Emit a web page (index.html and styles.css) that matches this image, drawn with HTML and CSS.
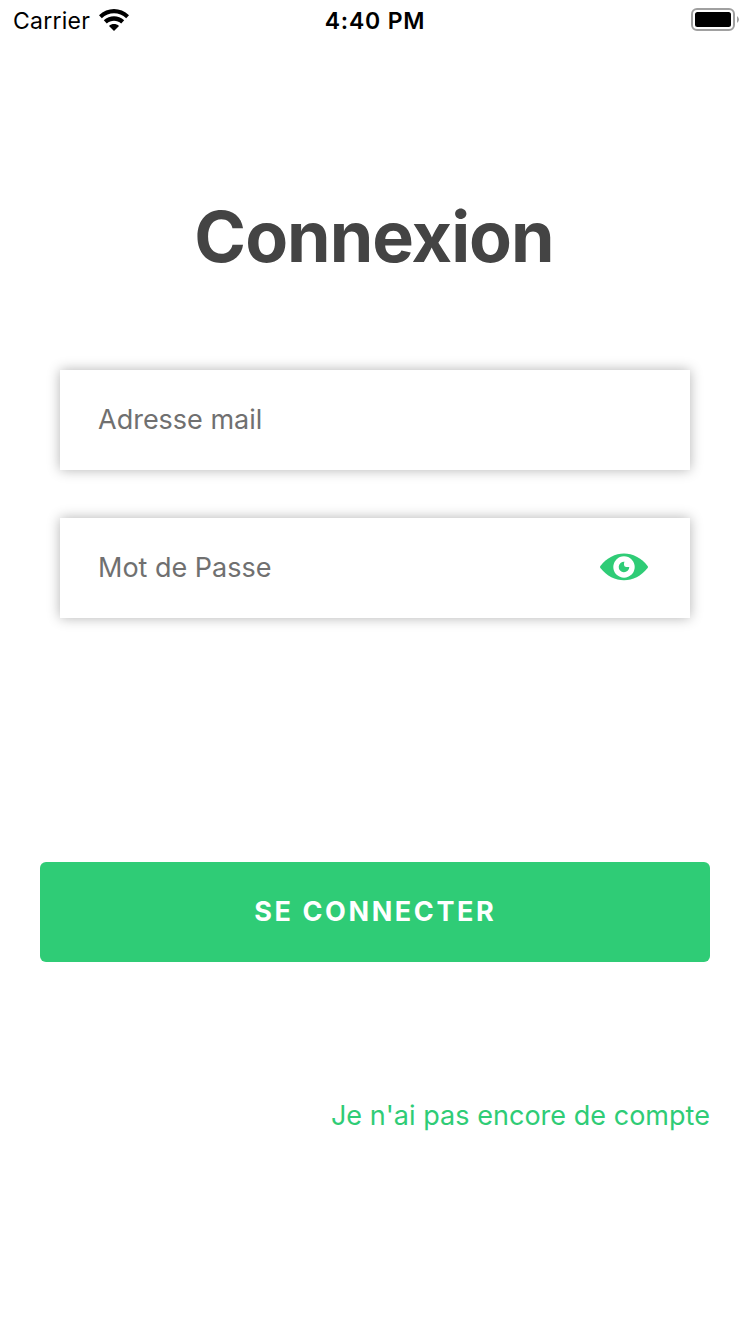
FILE: index.html
```html
<!DOCTYPE html>
<html lang="fr">
<head>
<meta charset="utf-8">
<title>Connexion</title>
<link rel="stylesheet" href="styles.css">
</head>
<body>
<header class="status">
  <div class="carrier"><span class="carrier-name">Carrier</span>
    <svg class="wifi" viewBox="0 0 30 22" width="30" height="22"><path d="M0 6.200C8.500-2 21.500-2 30 6.200L27.200 9.200C20.300 2.700 9.700 2.700 2.800 9.200Z"/><path d="M4.800 11.300C10.700 6 19.300 6 25.200 11.300L22.200 14.400C18.200 10.700 11.800 10.700 7.800 14.400Z"/><path d="M10 17C12.800 14.400 17.200 14.400 20 17L15 22Z"/></svg>
  </div>
  <div class="time">4:40 PM</div>
  <svg class="battery" viewBox="0 0 48 24" width="48" height="24"><rect x="1" y="1" width="42" height="21" rx="5" fill="none" stroke="#a0a0a0" stroke-width="2"/><rect x="4" y="4" width="36" height="15" rx="2.500"/><path d="M46 8Q50 11.500 46 15Z" fill="#a0a0a0"/></svg>
</header>
<main class="login">
  <h1 class="title">Connexion</h1>
  <form class="form">
    <div class="field"><span class="label">Adresse mail</span></div>
    <div class="field"><span class="label">Mot de Passe</span>
      <svg class="eye" viewBox="0 0 48 28" width="48" height="28"><path d="M.4 12.900C13-3.800 35-3.800 47.600 12.900Q48.300 14 47.600 15.100C35 31.400 13 31.400 .4 15.100Q-.3 14 .4 12.900Z" fill="#2fcc76"/><circle cx="24" cy="14" r="10.700" fill="#fff"/><path d="M24.500 8.700A5.300 5.300 0 1 0 29.300 14H26A2.300 2.300 0 0 1 24 11.600Q23.900 9.500 24.500 8.700Z" fill="#2fcc76"/></svg>
    </div>
  </form>
  <div class="button"><span class="button-text">SE CONNECTER</span></div>
  <a class="signup">Je n'ai pas encore de compte</a>
</main>
</body>
</html>
```
FILE: styles.css
```css
* { box-sizing: border-box; }
body { margin: 0; background: #fff; font-family: Inter, sans-serif; height: 1334px; overflow: hidden; }
.status { height: 40px; display: grid; grid-template-columns: 1fr auto 1fr; align-items: center; padding: 0 11px 0 13px; }
.carrier { display: flex; align-items: center; gap: 9px; font-size: 23px; letter-spacing: .25px; }
.carrier-name, .time { padding-top: 1px; }
.time { font-size: 23px; font-weight: 600; letter-spacing: .8px; margin-left: -2px; }
.battery { justify-self: end; }
.login { display: flex; flex-direction: column; padding: 0 40px; }
.title { margin: 152px 0 0; height: 90px; line-height: 90px; padding-right: 2px; text-align: center; font-size: 70px; font-weight: 700; letter-spacing: -1px; color: #444; }
.form { display: flex; flex-direction: column; gap: 48px; padding: 0 20px; margin-top: 88px; }
.field { height: 100px; display: flex; align-items: center; justify-content: space-between; padding: 0 42px 0 38px; background: #fff; box-shadow: 0 0 12px rgba(0,0,0,.3); font-size: 27px; color: #707070; }
.label, .eye, .button-text { margin-bottom: 2px; }
.button { margin-top: 244px; height: 100px; border-radius: 6px; background: #2fcc76; color: #fff; display: flex; align-items: center; justify-content: center; font-size: 27px; font-weight: 650; letter-spacing: 2.600px; }
.button-text { margin-right: -.6px; }
.signup { margin-top: 136px; text-align: right; font-size: 27px; line-height: 36px; letter-spacing: .03px; color: #2fcc76; }
```
